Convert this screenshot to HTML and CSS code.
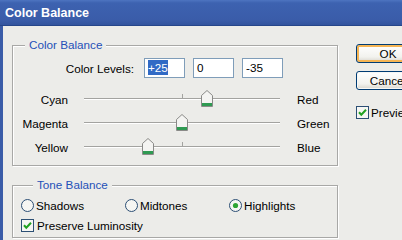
FILE: index.html
```html
<!DOCTYPE html>
<html>
<head>
<meta charset="utf-8">
<link rel="stylesheet" href="styles.css">
</head>
<body>
<div class="win">
  <div class="titlebar">Color Balance</div>
  <div class="client">
    <div class="main">
      <fieldset class="group g1">
        <legend>Color Balance</legend>
        <div class="levels">
          <span class="lvl-label">Color Levels:</span>
          <span class="field"><span class="sel">+25</span></span>
          <span class="field">0</span>
          <span class="field">-35</span>
        </div>
        <div class="sliders">
          <span class="sl-l">Cyan</span>
          <div class="track"><svg class="thumb" style="left:62.5%" width="12" height="17" viewBox="0 0 12 17"><polygon points="0.5,5.5 6,0.5 11.5,5.5 11.5,16.5 0.5,16.5" fill="#f4f4f2" stroke="#8a8a88"/><rect x="1" y="13" width="10" height="3" fill="#2f9a52"/></svg></div>
          <span class="sl-r">Red</span>
          <span class="sl-l">Magenta</span>
          <div class="track"><svg class="thumb" style="left:50%" width="12" height="17" viewBox="0 0 12 17"><polygon points="0.5,5.5 6,0.5 11.5,5.5 11.5,16.5 0.5,16.5" fill="#f4f4f2" stroke="#8a8a88"/><rect x="1" y="13" width="10" height="3" fill="#2f9a52"/></svg></div>
          <span class="sl-r">Green</span>
          <span class="sl-l">Yellow</span>
          <div class="track"><svg class="thumb" style="left:32.5%" width="12" height="17" viewBox="0 0 12 17"><polygon points="0.5,5.5 6,0.5 11.5,5.5 11.5,16.5 0.5,16.5" fill="#f4f4f2" stroke="#8a8a88"/><rect x="1" y="13" width="10" height="3" fill="#2f9a52"/></svg></div>
          <span class="sl-r">Blue</span>
        </div>
      </fieldset>
      <fieldset class="group g2">
        <legend>Tone Balance</legend>
        <div class="radios">
          <label class="opt"><svg class="radio" width="13" height="13" viewBox="0 0 13 13"><circle cx="6.5" cy="6.5" r="6" fill="#f6f6f3" stroke="#2c4f74"/></svg>Shadows</label>
          <label class="opt"><svg class="radio" width="13" height="13" viewBox="0 0 13 13"><circle cx="6.5" cy="6.5" r="6" fill="#f6f6f3" stroke="#2c4f74"/></svg>Midtones</label>
          <label class="opt"><svg class="radio" width="13" height="13" viewBox="0 0 13 13"><circle cx="6.5" cy="6.5" r="6" fill="#f6f6f3" stroke="#2c4f74"/><circle cx="6.5" cy="6.5" r="2.6" fill="#2ea534"/></svg>Highlights</label>
        </div>
        <label class="opt check-row"><svg class="check" width="13" height="13" viewBox="0 0 13 13"><rect x="0.5" y="0.5" width="12" height="12" fill="#f6f6f3" stroke="#2c4f74"/><path d="M3 6.2 L5.3 8.7 L10 3.8" fill="none" stroke="#21a121" stroke-width="2"/></svg>Preserve Luminosity</label>
      </fieldset>
    </div>
    <div class="side">
      <div class="btn btn-default">OK</div>
      <div class="btn">Cancel</div>
      <label class="opt preview"><svg class="check" width="13" height="13" viewBox="0 0 13 13"><rect x="0.5" y="0.5" width="12" height="12" fill="#f6f6f3" stroke="#2c4f74"/><path d="M3 6.2 L5.3 8.7 L10 3.8" fill="none" stroke="#21a121" stroke-width="2"/></svg>Preview</label>
    </div>
  </div>
</div>
</body>
</html>
```

FILE: styles.css
```css
html, body {
  margin: 0;
  padding: 0;
}
body {
  font-family: "Liberation Sans", Arial, sans-serif;
  font-size: 11.7px;
  color: #000;
  background: #ecece9;
}
.win {
  width: 402px;
  height: 240px;
  display: flex;
  flex-direction: column;
  overflow: hidden;
}
.titlebar {
  height: 25px;
  flex: none;
  border-bottom: 1px solid #26468a;
  background: linear-gradient(#4d74c0, #3d62b0 12%, #3a5ca9 80%, #33549e);
  color: #fff;
  font-weight: bold;
  font-size: 12.5px;
  padding-left: 5px;
  display: flex;
  align-items: center;
}
.client {
  flex: 1;
  display: flex;
  border-left: 3px solid #3a5ca8;
  background: #ecece9;
}
.main {
  margin-left: 9px;
  width: 326px;
  flex: none;
}
.group {
  margin: 0;
  padding: 0;
  border: 1px solid #a8a8a6;
  box-shadow: inset 1px 1px 0 #fff, 1px 1px 0 #fff;
  min-width: 0;
}
.group legend {
  margin-left: 12px;
  padding: 0 4px;
  line-height: 14px;
  color: #2450b8;
  background: #ecece9;
}
.g1 {
  margin-top: 12px;
  padding-bottom: 6px;
}
.levels {
  display: flex;
  align-items: center;
  gap: 8px;
  padding-top: 6px;
  height: 20px;
}
.lvl-label {
  width: 121px;
  text-align: right;
  margin-right: 2px;
}
.field {
  width: 41px;
  height: 20px;
  box-sizing: border-box;
  border: 1px solid #7f9db9;
  background: #fff;
  padding-left: 3px;
  line-height: 18px;
}
.sel {
  background: #316ac5;
  color: #fff;
  padding: 1px 0;
}
.sliders {
  display: grid;
  grid-template-columns: 55px 196px auto;
  grid-auto-rows: 24px;
  column-gap: 16px;
  align-items: center;
  margin-top: 9px;
}
.sl-l {
  text-align: right;
}
.sl-r {
  padding-left: 1px;
}
.track {
  position: relative;
  height: 0;
  border-top: 1px solid #a3a3a0;
  border-bottom: 1px solid #fff;
}
.track::before {
  content: "";
  position: absolute;
  left: 50%;
  top: -5px;
  width: 1px;
  height: 4px;
  background: #a3a3a0;
}
.thumb {
  position: absolute;
  top: -9px;
  margin-left: -6px;
  display: block;
}
.g2 {
  margin-top: 12px;
  padding: 3px 0 2px 8px;
}
.radios {
  display: grid;
  grid-template-columns: repeat(3, 104px);
  height: 20px;
  align-items: center;
}
.opt {
  display: flex;
  align-items: center;
  gap: 2px;
}
.opt svg {
  display: block;
  flex: none;
}
.check-row {
  height: 20px;
  gap: 3px;
}
.side {
  margin-left: 18px;
  padding-top: 18px;
  display: flex;
  flex-direction: column;
  align-items: flex-start;
}
.btn {
  width: 64px;
  height: 19px;
  box-sizing: border-box;
  border: 1px solid #003c74;
  border-radius: 3px;
  background: linear-gradient(#ffffff, #f2f2ee 70%, #d8d5cc);
  display: flex;
  align-items: center;
  justify-content: center;
  box-shadow: inset 0 0 0 1px #f7f7f4;
}
.btn + .btn {
  margin-top: 8px;
}
.btn-default {
  box-shadow: inset 0 0 0 2px #f5b555;
}
.preview {
  margin-top: 12px;
  height: 20px;
  gap: 2px;
}
```
